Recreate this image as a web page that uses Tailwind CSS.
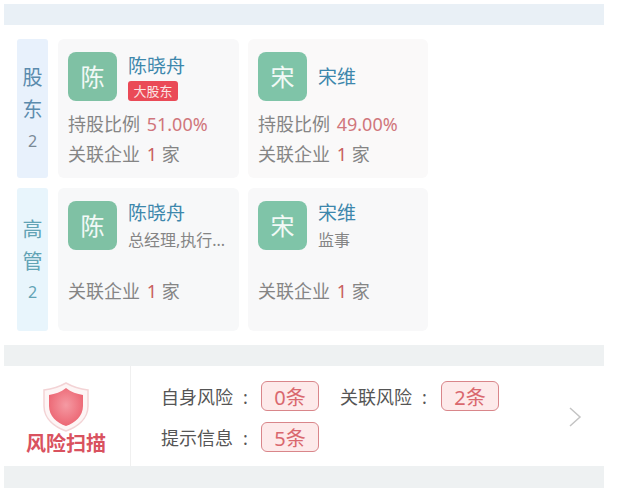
<!DOCTYPE html>
<html lang="zh">
<head>
    <meta charset="UTF-8">
    <title>股东高管</title>
    <script src="https://cdn.jsdelivr.net/npm/@tailwindcss/browser@4"></script>
</head>
<body class="bg-white font-['Noto_Sans','Noto_Sans_CJK_SC',sans-serif] text-[18px] text-[#858585]">
    <div class="w-[642px] h-[492px] overflow-hidden pt-[4px] pl-[4px]">
        <div class="w-[600px]">
            <div class="h-[21px] bg-[#e9f0f6]"></div>

            <!-- Shareholders -->
            <div class="flex pl-[13px] pt-[14px] gap-[10px] h-[153px]">
                <div class="w-[31px] h-[139px] rounded-[3px] bg-[#e8f1fc] flex flex-col items-center pt-[23px] text-[#5b8bad] text-[20px] leading-[32px]">
                    <span>股</span>
                    <span>东</span>
                    <span class="text-[16px] text-[#7a8a96] leading-[28px] mt-[1px]">2</span>
                </div>
                <div class="w-[181px] h-[139px] rounded-[6px] bg-[#f8f8f9] px-[10px] pt-[13px]">
                    <div class="flex gap-[11px]">
                        <div class="w-[49px] h-[49px] rounded-[8px] bg-[#7fc1a4] text-white/90 text-[24px] flex items-center justify-center">陈</div>
                        <div>
                            <div class="text-[19px] leading-[28px] text-[#3d87ac] mb-[1px]">陈晓舟</div>
                            <div class="w-[50px] h-[20px] rounded-[3px] bg-[#ea4a57] text-[#fbe4e4] text-[13px] leading-[20px] text-center">大股东</div>
                        </div>
                    </div>
                    <div class="mt-[8px] leading-[30px] whitespace-nowrap">持股比例 <span class="text-[#d0767c] ml-[2px]">51.00%</span></div>
                    <div class="leading-[30px] whitespace-nowrap">关联企业 <span class="text-[#c9605f] ml-[2px]">1</span> 家</div>
                </div>
                <div class="w-[180px] -ml-[1px] h-[139px] rounded-[6px] bg-[#faf9f9] px-[10px] pt-[13px]">
                    <div class="flex gap-[11px] items-center">
                        <div class="w-[49px] h-[49px] rounded-[8px] bg-[#7fc4a8] text-white/90 text-[24px] flex items-center justify-center">宋</div>
                        <div class="text-[19px] text-[#3d87ac] mt-[2px]">宋维</div>
                    </div>
                    <div class="mt-[8px] leading-[30px] whitespace-nowrap">持股比例 <span class="text-[#d0767c] ml-[2px]">49.00%</span></div>
                    <div class="leading-[30px] whitespace-nowrap">关联企业 <span class="text-[#c9605f] ml-[2px]">1</span> 家</div>
                </div>
            </div>

            <!-- Executives -->
            <div class="flex pl-[13px] pt-[10px] gap-[10px] h-[167px]">
                <div class="w-[31px] h-[143px] rounded-[3px] bg-[#e8f5fc] flex flex-col items-center pt-[26px] text-[#62a3b5] text-[20px] leading-[32px]">
                    <span>高</span>
                    <span>管</span>
                    <span class="text-[16px] leading-[28px]">2</span>
                </div>
                <div class="w-[181px] h-[143px] rounded-[6px] bg-[#f7f8f9] px-[10px] pt-[13px]">
                    <div class="flex gap-[11px]">
                        <div class="w-[49px] h-[49px] rounded-[8px] bg-[#7fc1a4] text-white/90 text-[24px] flex items-center justify-center">陈</div>
                        <div>
                            <div class="text-[19px] leading-[22px] mt-[1px] text-[#3d87ac]">陈晓舟</div>
                            <div class="text-[16px] leading-[28px] mt-[2px] whitespace-nowrap">总经理,执行...</div>
                        </div>
                    </div>
                    <div class="mt-[22px] leading-[30px] whitespace-nowrap">关联企业 <span class="text-[#c9605f] ml-[2px]">1</span> 家</div>
                </div>
                <div class="w-[180px] -ml-[1px] h-[143px] rounded-[6px] bg-[#f8f8f9] px-[10px] pt-[13px]">
                    <div class="flex gap-[11px]">
                        <div class="w-[49px] h-[49px] rounded-[8px] bg-[#7fc4a8] text-white/90 text-[24px] flex items-center justify-center">宋</div>
                        <div>
                            <div class="text-[19px] leading-[22px] mt-[1px] text-[#3d87ac]">宋维</div>
                            <div class="text-[16px] leading-[28px] mt-[2px] whitespace-nowrap">监事</div>
                        </div>
                    </div>
                    <div class="mt-[22px] leading-[30px] whitespace-nowrap">关联企业 <span class="text-[#c9605f] ml-[2px]">1</span> 家</div>
                </div>
            </div>

            <div class="h-[21px] bg-[#eef1f2]"></div>

            <!-- Risk scan -->
            <div class="flex h-[100px] items-stretch relative">
                <div class="w-[127px] border-r border-[#f0f0f0] flex flex-col items-center pt-[16px]">
                    <svg width="48" height="50" viewBox="0 0 48 50" class="-ml-[2px]">
                        <defs>
                            <radialGradient id="shieldFill" cx="50%" cy="45%" r="55%">
                                <stop offset="0%" stop-color="#f59aa3"/>
                                <stop offset="100%" stop-color="#ec6673"/>
                            </radialGradient>
                        </defs>
                        <path d="M24 1 C31 5 38 7 46 8 V24 C46 37 35 45 24 49 C13 45 2 37 2 24 V8 C10 7 17 5 24 1 Z" fill="#fdf5f5" stroke="#f3d3d5" stroke-width="1.5"/>
                        <path d="M24 6 C29 10 35 12 41 13 V24 C41 34 33 41 24 44 C15 41 7 34 7 24 V13 C13 12 19 10 24 6 Z" fill="url(#shieldFill)"/>
                    </svg>
                    <div class="text-[20px] leading-[24px] font-bold text-[#d9525f] whitespace-nowrap -ml-[2px]">风险扫描</div>
                </div>
                <div class="pl-[30px] pt-[15px] flex flex-col gap-[11px] text-[#555555]">
                    <div class="flex items-center h-[30px]">
                        <span class="w-[100px] pt-[3px] whitespace-nowrap">自身风险<span class="ml-[10px]">:</span></span>
                        <span class="w-[58px] h-[30px] pt-[3px] rounded-[6px] border border-[#d9868a] bg-[#fdeaea] text-[#d9686e] text-[20px] flex items-center justify-center">0条</span>
                        <span class="w-[101px] ml-[21px] pt-[3px] whitespace-nowrap">关联风险<span class="ml-[10px]">:</span></span>
                        <span class="w-[58px] h-[30px] pt-[3px] rounded-[6px] border border-[#d9868a] bg-[#fdeaea] text-[#d9686e] text-[20px] flex items-center justify-center">2条</span>
                    </div>
                    <div class="flex items-center h-[30px]">
                        <span class="w-[100px] pt-[2px] whitespace-nowrap">提示信息<span class="ml-[10px]">:</span></span>
                        <span class="w-[58px] h-[30px] pt-[3px] rounded-[6px] border border-[#d9868a] bg-[#fdeaea] text-[#d9686e] text-[20px] flex items-center justify-center">5条</span>
                    </div>
                </div>
                <svg class="absolute left-[564px] top-[41px]" width="14" height="20" viewBox="0 0 14 20">
                    <path d="M2 1 L12 10 L2 19" fill="none" stroke="#c4c4c4" stroke-width="1.5"/>
                </svg>
            </div>

            <div class="h-[22px] bg-[#eef1f2]"></div>
        </div>
    </div>
</body>
</html>
